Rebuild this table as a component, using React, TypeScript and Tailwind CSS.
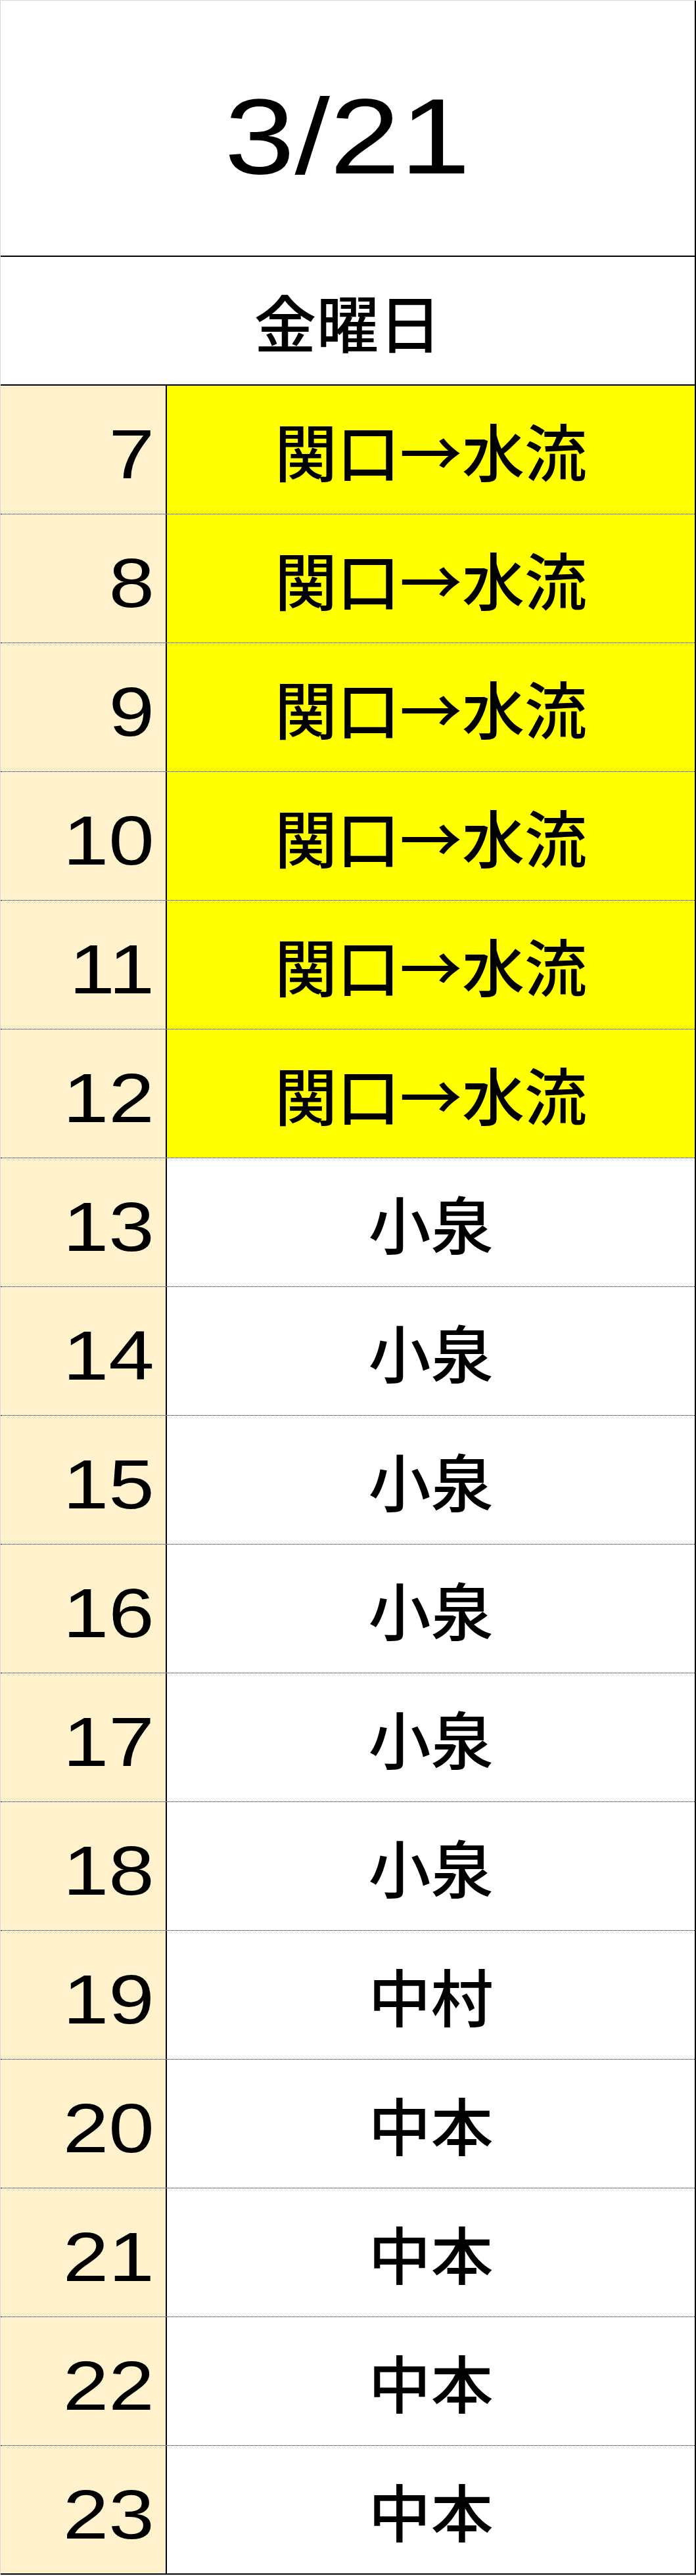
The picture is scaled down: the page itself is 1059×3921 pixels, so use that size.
const rows = [
  { hour: 7, name: '関口→水流', hl: true },
  { hour: 8, name: '関口→水流', hl: true },
  { hour: 9, name: '関口→水流', hl: true },
  { hour: 10, name: '関口→水流', hl: true },
  { hour: 11, name: '関口→水流', hl: true },
  { hour: 12, name: '関口→水流', hl: true },
  { hour: 13, name: '小泉', hl: false },
  { hour: 14, name: '小泉', hl: false },
  { hour: 15, name: '小泉', hl: false },
  { hour: 16, name: '小泉', hl: false },
  { hour: 17, name: '小泉', hl: false },
  { hour: 18, name: '小泉', hl: false },
  { hour: 19, name: '中村', hl: false },
  { hour: 20, name: '中本', hl: false },
  { hour: 21, name: '中本', hl: false },
  { hour: 22, name: '中本', hl: false },
  { hour: 23, name: '中本', hl: false },
];

const jp = "font-['Noto_Sans_CJK_JP',sans-serif] font-medium";
const num = "font-['Liberation_Sans',Arial,sans-serif]";

const App = () => {
  return (
    <div className="w-[1059px] bg-white text-black border-t border-l border-[#d9d9d9] box-border">
      <div className="border-r-2 border-black">
        <div className="h-[390px] border-b-2 border-black flex items-center justify-center pt-[25px]">
          <span className={`${num} inline-block text-[163px] leading-none scale-x-[1.18]`}>3/21</span>
        </div>
        <div className="h-[196px] border-b-2 border-black flex items-center justify-center">
          <span className={`${jp} text-[95px] leading-none`}>金曜日</span>
        </div>
        {rows.map((r, i) => {
          const last = i === rows.length - 1;
          return (
            <div
              key={r.hour}
              className={
                last
                  ? 'h-[196px] flex border-b-2 border-solid border-black'
                  : 'h-[196px] flex border-b border-dotted border-black'
              }
            >
              <div className="w-[253px] shrink-0 bg-[#fff2cc] border-r-2 border-black flex items-center justify-end pr-[17px] pt-[13px]">
                <span className={`${num} inline-block text-[106px] leading-none scale-x-[1.18] origin-right`}>
                  {r.hour}
                </span>
              </div>
              <div className={`flex-1 flex items-center justify-center ${r.hl ? 'bg-[#ffff00]' : 'bg-white'}`}>
                <span className={`${jp} text-[95px] leading-none`}>{r.name}</span>
              </div>
            </div>
          );
        })}
      </div>
    </div>
  );
};

export default App;
